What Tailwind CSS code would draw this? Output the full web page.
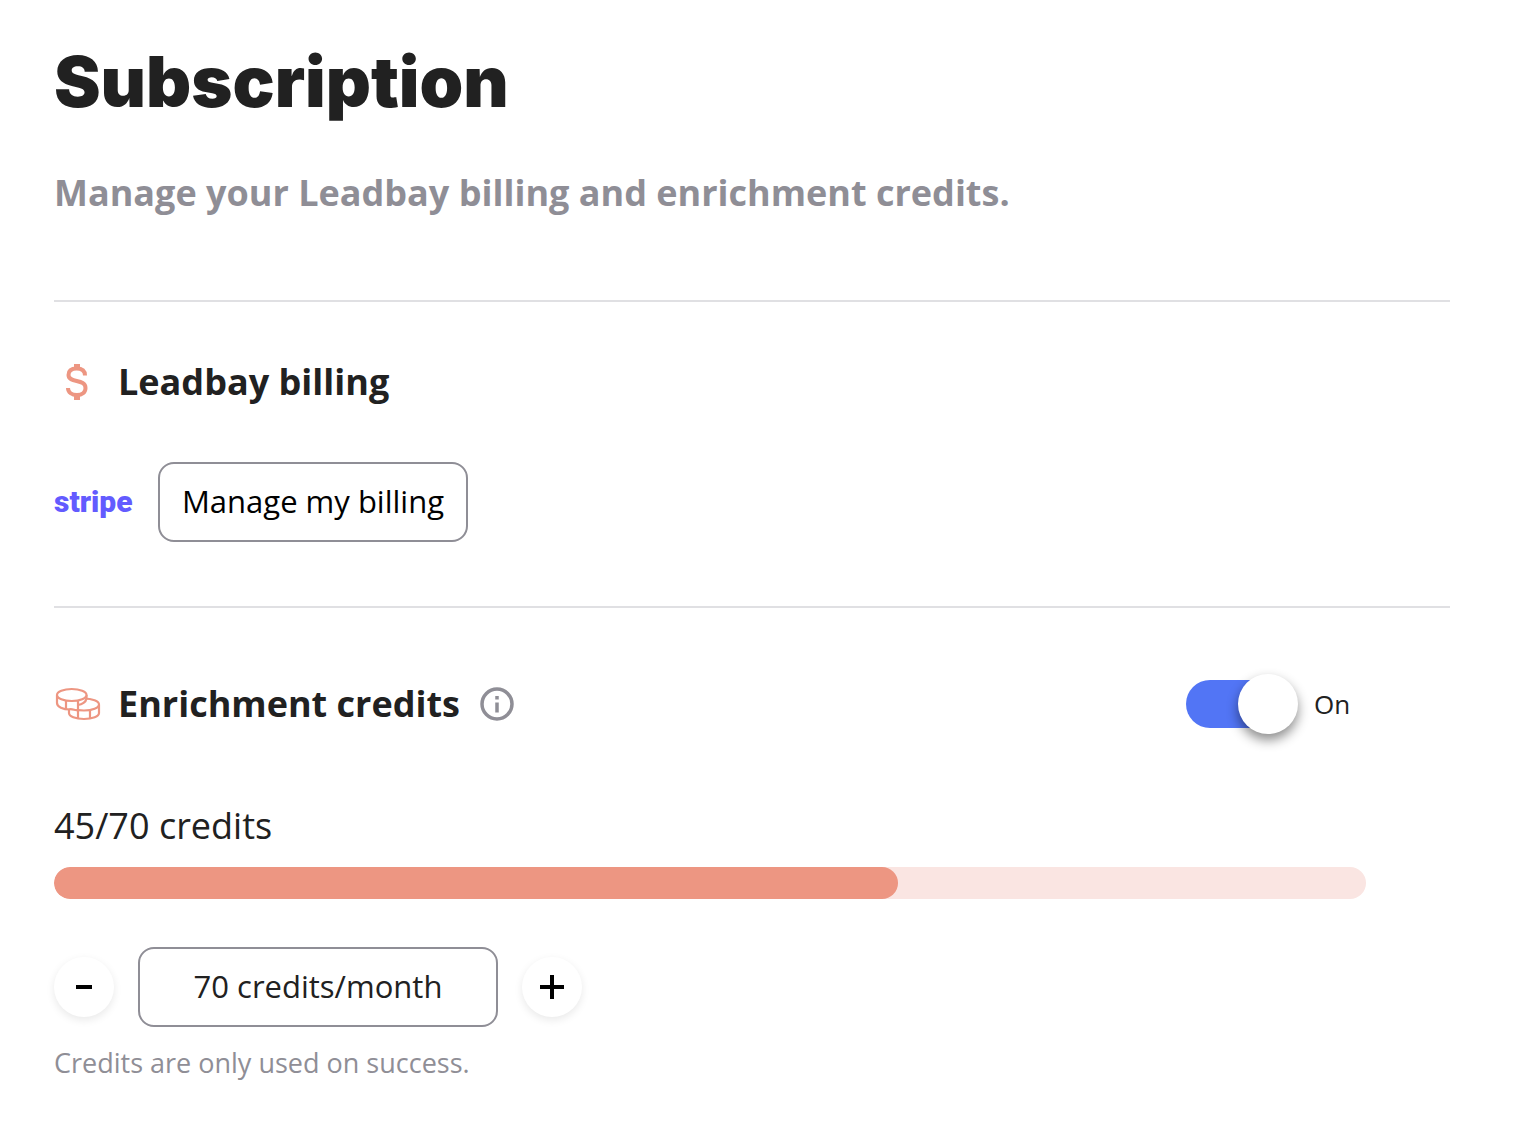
<!DOCTYPE html>
<html lang="en">
<head>
<meta charset="utf-8">
<meta name="viewport" content="width=device-width, initial-scale=1">
<title>Subscription</title>
<script src="https://cdn.jsdelivr.net/npm/@tailwindcss/browser@4"></script>
</head>
<body class="bg-white font-['Open_Sans',sans-serif] text-[#212121]">
<main class="pt-10 pr-20 pb-14 pl-[54px]">
  <header class="border-b-2 border-[#e0e0e3] pb-20">
    <h1 class="font-['Inter',sans-serif] text-[70px] leading-[84px] font-black">Subscription</h1>
    <p class="mt-[42px] text-[36px] leading-[54px] font-bold text-[#8f8e96]">Manage your Leadbay billing and enrichment credits.</p>
  </header>

  <section class="border-b-2 border-[#e0e0e3] pt-[54px] pb-16">
    <div class="flex items-center gap-4">
      <svg class="h-12 w-12" viewBox="0 0 48 48" fill="none" stroke="#ed9682" stroke-width="4" aria-hidden="true">
        <path d="M31 17.500C31 13 28 10.500 22.500 10.500S14.500 13 14.500 17C14.500 25.500 31.500 20.500 31.500 30C31.500 34.500 28 37 23 37S14 34.500 14 30"/>
        <path d="M23 6v5M23 37v5" stroke-width="6"/>
      </svg>
      <h2 class="text-[36px] leading-[52px] font-bold">Leadbay billing</h2>
    </div>
    <div class="mt-[54px] flex items-center gap-7">
      <span class="w-[76px] font-['Roboto',sans-serif] text-[30px] leading-10 font-black text-[#635bff]">stripe</span>
      <button type="button" class="h-20 w-[310px] rounded-2xl border-2 border-[#8f8e96] pb-0.5 text-[31px] font-medium text-black">Manage my billing</button>
    </div>
  </section>

  <section class="pt-[66px]">
    <div class="flex w-[94%] items-center justify-between pr-4">
      <div class="flex items-center gap-4">
        <svg class="h-12 w-12" viewBox="0 0 48 48" fill="#fff" stroke="#ed9682" stroke-width="2.200" aria-hidden="true">
          <path d="M15 24.500v8.500C15 36.500 21.500 39 30 39S45 36.500 45 33V24.500"/>
          <ellipse cx="30" cy="24.500" rx="15" ry="6"/>
          <path d="M24 30v8.500M36 30v8.500"/>
          <path stroke="none" d="M3 15v8C3 26.500 9.500 29.500 18 29.500C26 29.500 32 27 32.500 20V15"/>
          <path fill="none" d="M3 15v8C3 27 9 29.500 16 29.500M32.500 15v4M24 20.500v10M15 29.500C17 28 21 30.500 24 30.500"/>
          <ellipse cx="17.750" cy="15" rx="14.750" ry="6"/>
          <path d="M12 20.500v8.500M24 25C28 24.500 32 22 32.500 18.500" fill="none"/>
        </svg>
        <h2 class="text-[36px] leading-[60px] font-bold">Enrichment credits</h2>
        <button type="button" aria-label="About enrichment credits" class="ml-1">
          <svg class="h-[34px] w-[34px]" viewBox="0 0 34 34" fill="none" stroke="#8f8e96" stroke-width="3.500" aria-hidden="true">
            <circle cx="17" cy="17" r="15"/>
            <path d="M17 9v3.500M17 15.500v10"/>
          </svg>
        </button>
      </div>
      <label class="flex items-center gap-6 text-[26px] leading-9 font-medium">
        <input type="checkbox" role="switch" checked class="relative h-12 w-[104px] appearance-none rounded-full bg-[#5275f5] before:absolute before:-top-1.5 before:-right-2 before:h-[60px] before:w-[60px] before:rounded-full before:bg-white before:shadow-[0_6px_12px_rgba(0,0,0,0.45)]">
        <span>On</span>
      </label>
    </div>

    <p id="usage" class="mt-[66px] text-[36px] leading-[52px] font-medium">45/70 credits</p>
    <div role="progressbar" aria-labelledby="usage" aria-valuemin="0" aria-valuemax="70" aria-valuenow="45" class="mt-[15px] h-8 w-[94%] overflow-hidden rounded-full bg-[#fae5e2]">
      <div class="h-full rounded-full bg-[#ed9682]" style="width:64.286%"></div>
    </div>

    <div class="mt-12 flex items-center gap-6">
      <button type="button" aria-label="Fewer credits" class="flex h-[60px] w-[60px] items-center justify-center rounded-full bg-white shadow-[0_3px_8px_rgba(0,0,0,0.09)]">
        <svg class="h-6 w-6" viewBox="0 0 24 24" stroke="#000" stroke-width="4" aria-hidden="true"><path d="M4 12h16"/></svg>
      </button>
      <input type="text" readonly value="70 credits/month" aria-label="Monthly credits" class="h-20 w-[360px] rounded-2xl border-2 border-[#8f8e96] pb-0.5 text-center text-[31px] font-medium">
      <button type="button" aria-label="More credits" class="flex h-[60px] w-[60px] items-center justify-center rounded-full bg-white shadow-[0_3px_8px_rgba(0,0,0,0.09)]">
        <svg class="h-6 w-6" viewBox="0 0 24 24" stroke="#000" stroke-width="4" aria-hidden="true"><path d="M0 12h24M12 0v24"/></svg>
      </button>
    </div>
    <p class="mt-[18px] text-[27px] leading-9 font-medium text-[#8f8e96]">Credits are only used on success.</p>
  </section>
</main>
</body>
</html>
